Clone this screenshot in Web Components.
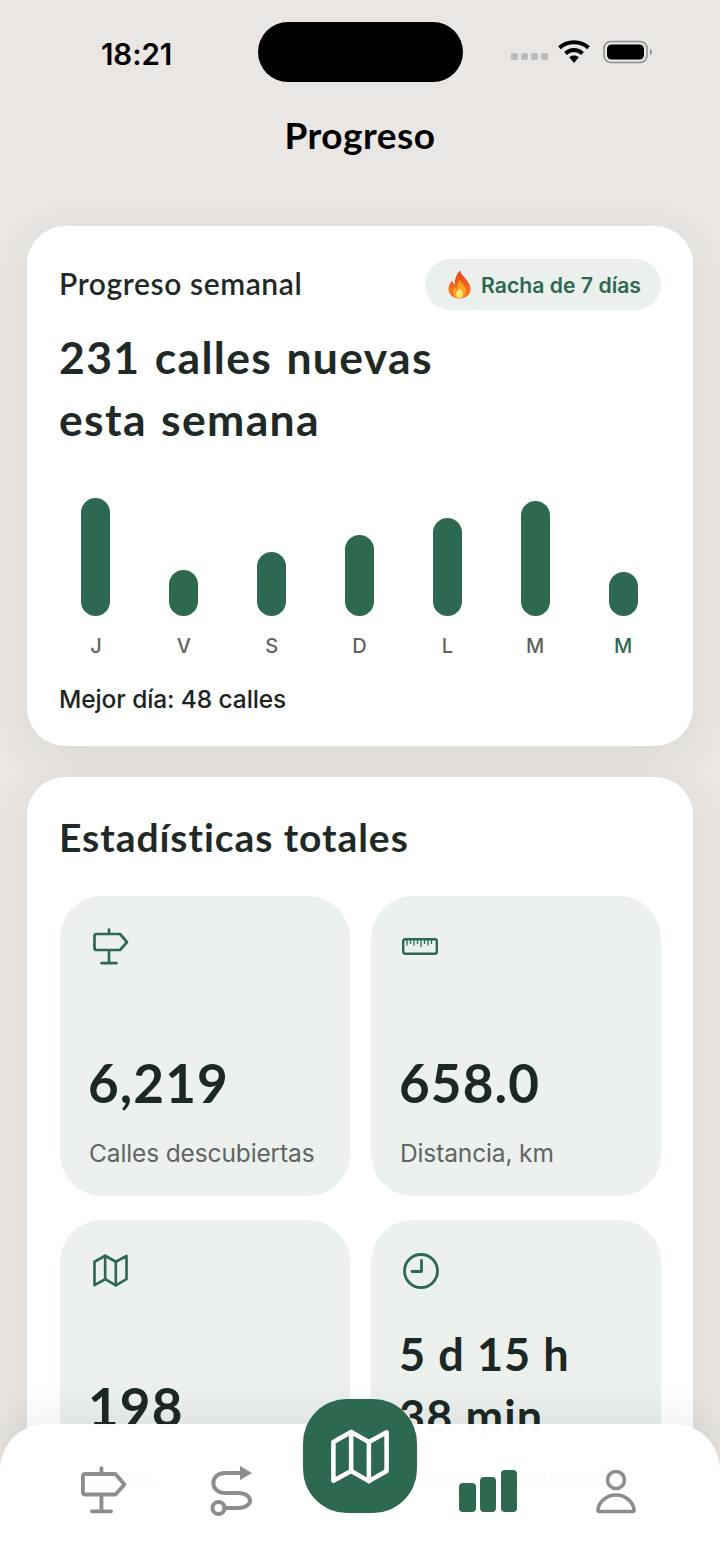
<!DOCTYPE html>
<html lang="es"><head><meta charset="utf-8"><title>Progreso</title>
<style>
html,body{margin:0;padding:0;background:#e9e6e3}
</style></head><body>
<progress-app></progress-app>
<script>
const HEAD='"Lato","Open Sans",sans-serif', BODY='"Inter","Liberation Sans",sans-serif';
const G='#2d6850';
const def=(n,html)=>customElements.define(n,class extends HTMLElement{constructor(){super();this.attachShadow({mode:'open'}).innerHTML=html;}});
const sign=(c,sw)=>`<svg viewBox="0 0 36 37" width="100%" height="100%" fill="none" stroke="${c}" stroke-width="${sw}" stroke-linecap="round" stroke-linejoin="round"><path d="M16 1.500V6M16 22.500V35M8.500 35.200H23.500"/><path d="M3.500 6H27L34 14.200L27 22H3.500Q1.500 22 1.500 20V8Q1.500 6 3.500 6Z"/></svg>`;
const mapI=(c,sw)=>`<svg viewBox="0 0 36 34" width="100%" height="100%" fill="none" stroke="${c}" stroke-width="${sw}" stroke-linecap="round" stroke-linejoin="round"><path d="M1.500 8L12.500 1.800L23.500 8L34.500 2V26L23.500 32.300L12.500 26L1.500 32Z"/><path d="M12.500 1.800V26M23.500 8V32.300"/></svg>`;

def('status-bar',`<style>
:host{display:flex;align-items:flex-start;height:82px;box-sizing:border-box;padding-top:22px;font-family:${BODY};color:#000}
.time{width:258px;box-sizing:border-box;padding:16px 0 0 101px;font-size:29.500px;line-height:32px;font-weight:600;letter-spacing:-.1px}
.island{width:205px;height:60px;border-radius:30px/30px;background:#000}
.right{flex:1;display:flex;align-items:center;padding:17px 0 0 48px;height:26px}
.dots{display:flex;gap:3.500px;margin:9px 10px 0 0}
.dots i{width:6.500px;height:6.500px;border-radius:2px;background:#bdbbb9}
</style><div class="time">18:21</div><div class="island"></div><div class="right">
<div class="dots"><i></i><i></i><i></i><i></i></div>
<svg width="32" height="24" viewBox="0 0 32 24"><path d="M1.500 7.800C9.500 .4 22.500 .4 30.500 7.800" fill="none" stroke="#000" stroke-width="4"/><path d="M7.500 13.400C12.500 8.900 19.500 8.900 24.500 13.400" fill="none" stroke="#000" stroke-width="4"/><path d="M11.200 17.200C14 14.800 18 14.800 20.800 17.200L16 23Z" fill="#000"/></svg>
<svg style="margin-left:13px" width="50" height="24" viewBox="0 0 50 24"><rect x="1" y="1.500" width="43" height="21" rx="7" fill="none" stroke="#8f8e8c" stroke-width="1.600"/><rect x="4" y="4.500" width="37" height="15" rx="4.500" fill="#000"/><path d="M47 8.500a4 4 0 0 1 0 7z" fill="#9a9997"/></svg>
</div>`);

def('page-title',`<style>:host{display:block;height:118px;box-sizing:border-box;padding-top:30px;text-align:center;font:700 37px/46px ${HEAD};color:#000;letter-spacing:.5px}</style><slot></slot>`);

def('pill-badge',`<style>:host{display:inline-flex;align-items:center;gap:9px;height:51px;box-sizing:border-box;padding:0 20px 0 22px;margin-right:-1px;border-radius:26px;background:#ebf0ed;color:${G};font:600 21.200px/24px ${BODY}}
svg{width:25px;height:29px;flex:none}</style>
<svg viewBox="0 0 25 29"><defs><linearGradient id="f" x1="0" y1="0" x2="0" y2="1"><stop offset="0" stop-color="#e8401c"/><stop offset=".7" stop-color="#f7711f"/></linearGradient></defs><path d="M13 .5C14 6 22.500 10 23.500 18c.6 6-4 10.500-11 10.500S1 24 1.600 18C2 14.500 4 12 5 10.500c.5 2 1.300 3.200 2.700 4C7.500 9.500 9.500 4 13 .5Z" fill="url(#f)"/><path d="M13 10c.8 3.500 6 6 6 11.500 0 4-3 6.800-6.500 6.800S6 25.500 6 21.500c0-2 1-3.500 2-4.500.4 1.300 1 2 2 2.500 0-3.500 1-6.500 3-9.500Z" fill="#ffa51f"/><path d="M12.700 18c.5 1.700 3.300 3 3.300 6 0 2.500-1.700 4.300-3.600 4.300S9 26.500 9 24c0-2.300 2.500-3.500 3.700-6Z" fill="#ffe27a"/></svg><slot></slot>`);

def('bar-col',`<style>:host{display:flex;flex-direction:column;align-items:center;justify-content:flex-end}
.b{width:29px;border-radius:15px;background:${G};height:var(--h)}
.l{margin-top:19px;font:500 20px/23px ${BODY};color:var(--c,#626262)}</style><div class="b"></div><div class="l"><slot></slot></div>`);

def('week-card',`<style>
:host{display:block;border-radius:38px;background:#fff;box-shadow:0 10px 44px rgba(60,50,40,.07);padding:33px;height:520px;box-sizing:border-box}
.top{display:flex;justify-content:space-between;align-items:center;height:51px}
.sub{font:600 30px/34px ${HEAD};color:#1f2a27;letter-spacing:.6px;margin:-3px 0 0 -1px}
h2{margin:16px 0 0 -1px;font:700 44.500px/62px ${HEAD};color:#1f2a27;letter-spacing:1.350px;word-spacing:2px}
.chart{display:grid;grid-template-columns:repeat(7,1fr);gap:16px;margin:36px 1px 0 0;height:172px;align-items:end}
.best{margin:27px 0 0 -1px;font:500 24.500px/28px ${BODY};color:#1c2422;letter-spacing:-.1px}
</style>
<div class="top"><div class="sub">Progreso semanal</div><pill-badge>Racha de 7 días</pill-badge></div>
<h2>231 calles nuevas<br>esta semana</h2>
<div class="chart">
<bar-col style="--h:118px">J</bar-col><bar-col style="--h:46px">V</bar-col><bar-col style="--h:64px">S</bar-col><bar-col style="--h:81px">D</bar-col><bar-col style="--h:98px">L</bar-col><bar-col style="--h:115px">M</bar-col><bar-col style="--h:44px;--c:${G}">M</bar-col>
</div>
<div class="best">Mejor día: 48 calles</div>`);

def('stat-tile',`<style>
:host{display:flex;flex-direction:column;height:300px;box-sizing:border-box;padding:32px 29px 29px;border-radius:42px;background:#ecf1ee}
.i{height:36px;flex:none;display:flex;align-items:flex-start}
.v{margin:auto 0 0 -1px;font:700 53px/62px ${HEAD};color:#1c2825;letter-spacing:1.100px}
.l{margin-top:25px;font:400 24.500px/28px ${BODY};color:#5f6563;letter-spacing:-.13px;white-space:nowrap}
::slotted([slot=icon]){display:block}
</style><div class="i"><slot name="icon"></slot></div><div class="v"><slot name="value"></slot></div><div class="l"><slot name="label"></slot></div>`);

def('totals-card',`<style>
:host{display:block;border-radius:38px 38px 0 0;background:#fff;box-shadow:0 10px 44px rgba(60,50,40,.07);padding:37px 33px 33px}
h2{margin:0 0 36px -1px;font:700 39px/46px ${HEAD};color:#1f2a27;letter-spacing:.95px}
.g{display:grid;grid-template-columns:290px 290px;column-gap:21px;row-gap:24px}
</style><h2>Estadísticas totales</h2><div class="g"><slot></slot></div>`);

def('nav-bar',`<style>
:host{position:absolute;left:0;right:0;bottom:0;height:140px;border-radius:46px 46px 0 0;background:rgba(255,255,255,.98);box-shadow:0 -12px 36px rgba(40,40,30,.07);display:grid;grid-template-columns:repeat(5,1fr);padding:0 40px;box-sizing:border-box}
.c{position:relative;display:flex;justify-content:center;align-items:flex-start;padding-top:42px}
.fab{position:absolute;left:50%;top:-25px;margin-left:-57px;width:114px;height:114px;border-radius:44px;background:${G};display:flex;align-items:center;justify-content:center;box-sizing:border-box}
</style>
<div class="c"><div style="width:46px;height:48px">${sign('#8d8d8d',3)}</div></div>
<div class="c"><svg width="44" height="52" viewBox="0 0 44 52" fill="none" stroke="#8d8d8d" stroke-width="4" stroke-linecap="round"><path d="M31 7H15C-.5 7 -.5 27 15 27H28C44 27 44 42 28 42H14.500"/><path d="M30 0L42 7L30 14Z" fill="#8d8d8d" stroke="none"/><circle cx="8.500" cy="42" r="6"/></svg></div>
<div class="c"><div class="fab"><div style="width:58px;height:55px">${mapI('#fff',2.800)}</div></div></div>
<div class="c" style="padding-top:46px"><svg width="58" height="42" viewBox="0 0 58 42" fill="${G}"><rect x="0" y="13" width="17" height="29" rx="4"/><rect x="21" y="7" width="16" height="35" rx="4"/><rect x="42" y="0" width="16" height="42" rx="4"/></svg></div>
<div class="c" style="padding-top:46px"><svg width="40" height="44" viewBox="0 0 40 44" fill="none" stroke="#8d8d8d" stroke-width="3.600" stroke-linejoin="round"><circle cx="20" cy="10" r="8.500"/><path d="M2 40.500C2 33 10 25 20 25S38 33 38 40.500Q38 41.500 37 41.500H3Q2 41.500 2 40.500Z"/></svg></div>`);

def('progress-app',`<style>
:host{display:flex;flex-direction:column;position:relative;width:720px;height:1564px;overflow:hidden;background:#e9e6e3}
.s{padding:26px 27px 0;display:flex;flex-direction:column;gap:31px;flex:1;min-height:0}
</style>
<status-bar></status-bar><page-title>Progreso</page-title>
<div class="s"><week-card></week-card>
<totals-card>
<stat-tile><div slot="icon" style="width:36px;height:37px;margin-left:4px">${sign(G,2.700)}</div><span slot="value">6,219</span><span slot="label">Calles descubiertas</span></stat-tile>
<stat-tile><svg slot="icon" style="margin:10px 0 0 2px" width="36" height="17" viewBox="0 0 36 17" fill="none" stroke="${G}"><rect x="1.200" y="1.200" width="33.600" height="14.600" rx="2" stroke-width="2.400"/><path d="M5 2V7.500M8.500 2V6M12 2V7.500M15.500 2V6M19 2V9M22.500 2V6M26 2V7.500M29.500 2V6" stroke-width="1.300"/></svg><span slot="value">658.0</span><span slot="label">Distancia, km</span></stat-tile>
<stat-tile><div slot="icon" style="width:35px;height:33px;margin:2px 0 0 4px">${mapI(G,2.700)}</div><span slot="value">198</span><span slot="label">Áreas</span></stat-tile>
<stat-tile><svg slot="icon" style="margin:1px 0 0 3px" width="36" height="36" viewBox="0 0 36 36" fill="none" stroke="${G}" stroke-width="2.800" stroke-linecap="round" stroke-linejoin="round"><circle cx="18" cy="18" r="16.500"/><path d="M18.500 7.500V18.500H9"/></svg><span slot="value" style="display:block;font-size:45px;margin-bottom:-9px;font-weight:700">5 d 15 h<br>38 min</span><span slot="label">Tiempo caminando</span></stat-tile>
</totals-card></div>
<nav-bar></nav-bar>`);
</script>
</body></html>
